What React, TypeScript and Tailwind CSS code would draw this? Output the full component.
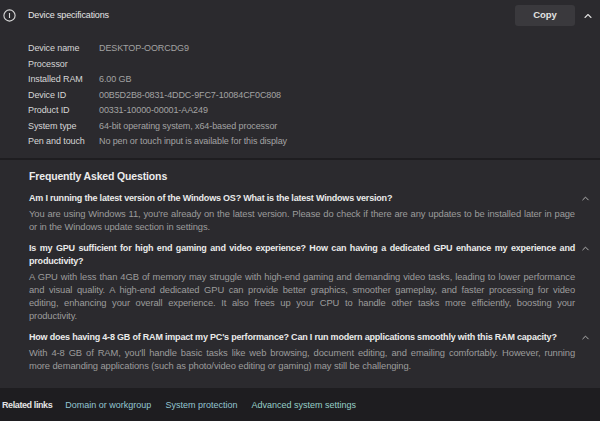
import { ChevronUp } from 'lucide-react';

const specs = [
  ['Device name', 'DESKTOP-OORCDG9'],
  ['Processor', ''],
  ['Installed RAM', '6.00 GB'],
  ['Device ID', '00B5D2B8-0831-4DDC-9FC7-10084CF0C808'],
  ['Product ID', '00331-10000-00001-AA249'],
  ['System type', '64-bit operating system, x64-based processor'],
  ['Pen and touch', 'No pen or touch input is available for this display'],
];

// lines are kept as in the screenshot so the justified wrapping matches
const faqs = [
  {
    q: ['Am I running the latest version of the Windows OS? What is the latest Windows version?'],
    a: [
      "You are using Windows 11, you're already on the latest version. Please do check if there are any updates to be installed later in page",
      'or in the Windows update section in settings.',
    ],
  },
  {
    q: [
      'Is my GPU sufficient for high end gaming and video experience? How can having a dedicated GPU enhance my experience and',
      'productivity?',
    ],
    a: [
      'A GPU with less than 4GB of memory may struggle with high-end gaming and demanding video tasks, leading to lower performance',
      'and visual quality. A high-end dedicated GPU can provide better graphics, smoother gameplay, and faster processing for video',
      'editing, enhancing your overall experience. It also frees up your CPU to handle other tasks more efficiently, boosting your',
      'productivity.',
    ],
  },
  {
    q: ["How does having 4-8 GB of RAM impact my PC's performance? Can I run modern applications smoothly with this RAM capacity?"],
    a: [
      "With 4-8 GB of RAM, you'll handle basic tasks like web browsing, document editing, and emailing comfortably. However, running",
      'more demanding applications (such as photo/video editing or gaming) may still be challenging.',
    ],
  },
];

const Lines = ({ lines, className }: { lines: string[]; className: string }) => (
  <div className={className}>
    {lines.map((l, i) => (
      <div
        key={i}
        className={i < lines.length - 1 ? 'text-justify [text-align-last:justify] whitespace-nowrap' : 'whitespace-nowrap'}
      >
        {l}
      </div>
    ))}
  </div>
);

export default function App() {
  return (
    <div className="w-[600px] h-[421px] overflow-hidden bg-[#1e1d20] font-['Liberation_Sans',sans-serif]">
      {/* Device specifications card */}
      <div className="bg-[#2b2a2e]">
        <div className="flex items-center h-[31px] pl-[3px] pr-[6px]">
          <svg width="13" height="13" viewBox="0 0 13 13" fill="none" className="text-[#d8d8d8]">
            <circle cx="6.5" cy="6.5" r="5.6" stroke="currentColor" strokeWidth="1.1" />
            <line x1="6.5" y1="4" x2="6.5" y2="9" stroke="currentColor" strokeWidth="1.1" />
          </svg>
          <span className="ml-[12px] text-[9px] tracking-[-0.15px] text-[#e6e6e6]">Device specifications</span>
          <div className="ml-auto flex items-center gap-[7px]">
            <button className="w-[60px] h-[21px] rounded-[3px] bg-[#3a393d] text-[9.5px] font-bold text-[#e2e2e2]">
              Copy
            </button>
            <ChevronUp size={12} strokeWidth={2.2} className="text-[#dcdcdc]" />
          </div>
        </div>
        <div className="pl-[28px] pt-[10px] pb-[8px]">
          {specs.map(([k, v]) => (
            <div key={k} className="flex h-[15.5px] items-center text-[9px] tracking-[-0.1px]">
              <span className="w-[71px] text-[#d6d6d6]">{k}</span>
              <span className="text-[#a3a3a3]">{v}</span>
            </div>
          ))}
        </div>
      </div>

      {/* FAQ card */}
      <div className="mt-[2px] bg-[#2b2a2e] pl-[29px] pr-[9px] pt-[8px] pb-[16px]">
        <h2 className="text-[10.5px] leading-[16px] font-bold tracking-[-0.15px] text-[#ececec] mb-[8px]">
          Frequently Asked Questions
        </h2>
        {faqs.map((f, i) => (
          <div key={i} className="mb-[9px] last:mb-0">
            <div className="flex items-start">
              <Lines
                lines={f.q}
                className="flex-1 min-w-0 text-[9px] leading-[13px] font-bold tracking-[-0.2px] text-[#eaeaea]"
              />
              <ChevronUp size={11} strokeWidth={2} className="ml-[5px] mt-[1px] shrink-0 text-[#bdbdbd]" />
            </div>
            <Lines
              lines={f.a}
              className="mr-[16px] mt-[2px] text-[9.4px] leading-[13px] tracking-[-0.1px] text-[#9c9c9c]"
            />
          </div>
        ))}
      </div>

      {/* Related links */}
      <div className="flex items-center gap-[14px] h-[36px] pl-[2px] text-[9px]">
        <span className="font-bold tracking-[-0.4px] text-[#e4e4e4] mr-[-1px]">Related links</span>
        <span className="text-[#93c5d2]">Domain or workgroup</span>
        <span className="text-[#93c5d2]">System protection</span>
        <span className="text-[#96cfc8]">Advanced system settings</span>
      </div>
    </div>
  );
}
